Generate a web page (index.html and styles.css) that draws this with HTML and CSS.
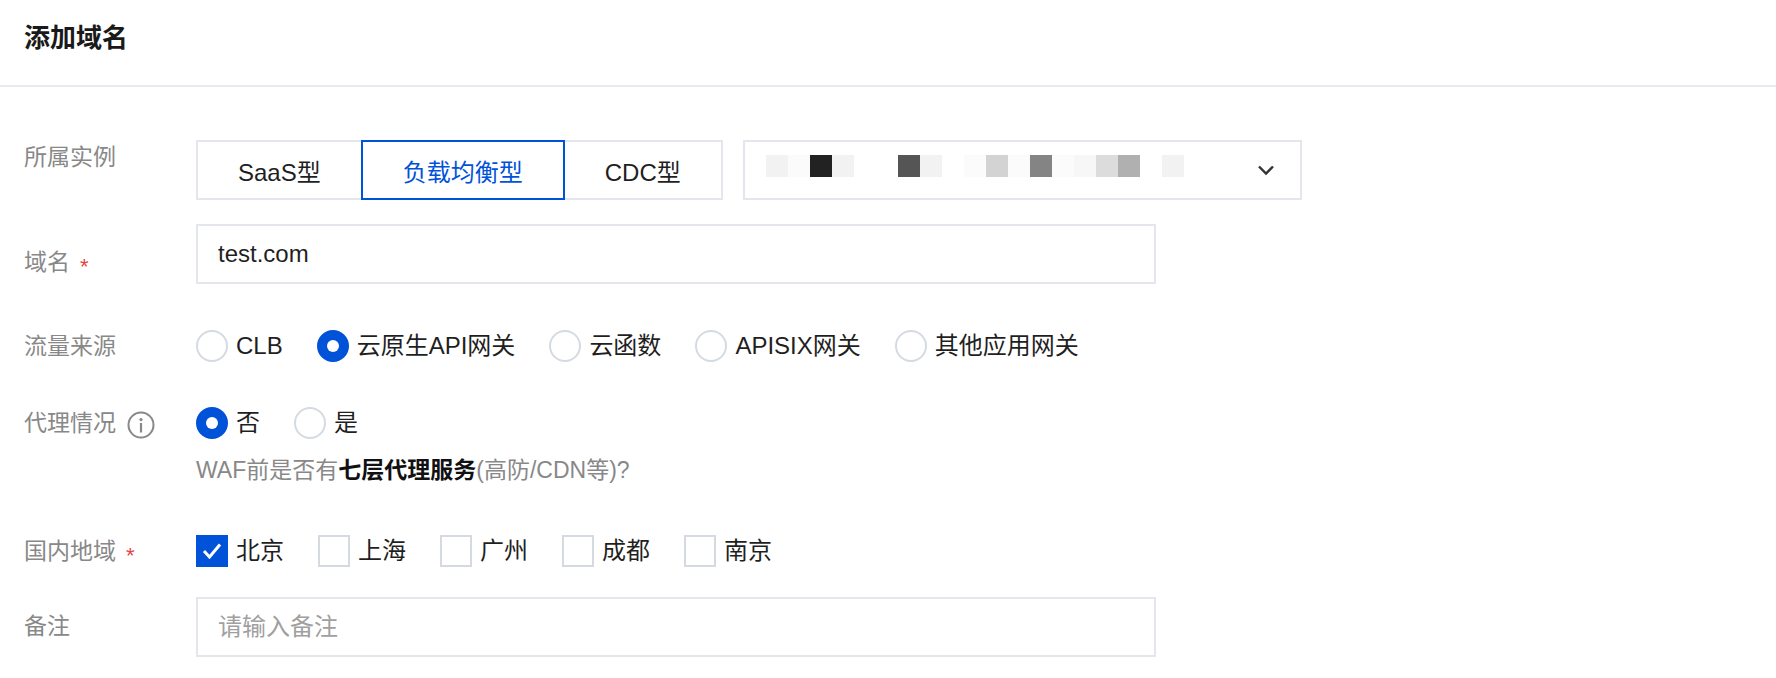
FILE: index.html
```html
<!DOCTYPE html>
<html lang="zh-CN">
<head>
  <meta charset="UTF-8" />
  <meta name="viewport" content="width=device-width, initial-scale=1.0"/>
  <title>添加域名</title>
  <link rel="stylesheet" href="styles.css">
</head>
<body>

  <div class="panel-head">
    <h2 class="panel-title">添加域名</h2>
  </div>

  <form class="form">

    <div class="form-row row-instance">
      <label class="form-label">所属实例</label>
      <div class="form-control">
        <div class="segment">
          <button type="button" class="seg-btn">SaaS型</button>
          <button type="button" class="seg-btn is-active">负载均衡型</button>
          <button type="button" class="seg-btn">CDC型</button>
        </div>
        <div class="select">
          <div class="mosaic">
            <span class="m-a"></span><span class="m-b"></span><span class="m-k"></span><span class="m-a"></span>
            <span></span><span></span><span class="m-d"></span><span class="m-a"></span>
            <span></span><span class="m-b"></span><span class="m-g"></span><span class="m-b"></span>
            <span class="m-e"></span><span class="m-b"></span><span class="m-c"></span><span class="m-h"></span>
            <span class="m-f"></span><span></span><span class="m-a"></span>
          </div>
          <svg class="select-arrow" width="18" height="12" viewBox="0 0 18 12">
            <path d="M2 2.5 L9 9.5 L16 2.5" fill="none" stroke="#333" stroke-width="2.4"/>
          </svg>
        </div>
      </div>
    </div>

    <div class="form-row row-domain">
      <label class="form-label">域名<span class="required">*</span></label>
      <div class="form-control">
        <input class="text-input" type="text" value="test.com">
      </div>
    </div>

    <div class="form-row row-source">
      <label class="form-label">流量来源</label>
      <div class="form-control">
        <span class="radio"><i class="radio-dot"></i>CLB</span>
        <span class="radio is-checked"><i class="radio-dot"></i>云原生API网关</span>
        <span class="radio"><i class="radio-dot"></i>云函数</span>
        <span class="radio"><i class="radio-dot"></i>APISIX网关</span>
        <span class="radio"><i class="radio-dot"></i>其他应用网关</span>
      </div>
    </div>

    <div class="form-row row-proxy">
      <label class="form-label">代理情况
        <svg class="info-icon" width="28" height="28" viewBox="0 0 28 28">
          <circle cx="14" cy="14" r="12.5" fill="none" stroke="#888" stroke-width="2"/>
          <circle cx="14" cy="8.6" r="1.6" fill="#888"/>
          <rect x="12.9" y="12" width="2.2" height="9.5" fill="#888"/>
        </svg>
      </label>
      <div class="form-control stack">
        <div class="radio-group">
          <span class="radio is-checked"><i class="radio-dot"></i>否</span>
          <span class="radio"><i class="radio-dot"></i>是</span>
        </div>
        <p class="help">WAF前是否有<b>七层代理服务</b>(高防/CDN等)?</p>
      </div>
    </div>

    <div class="form-row row-region">
      <label class="form-label">国内地域<span class="required">*</span></label>
      <div class="form-control">
        <span class="checkbox is-checked">
          <i class="check-box">
            <svg width="32" height="32" viewBox="0 0 32 32"><path d="M8 16 L13.5 22 L24 9.5" fill="none" stroke="#fff" stroke-width="3"/></svg>
          </i>北京
        </span>
        <span class="checkbox"><i class="check-box"></i>上海</span>
        <span class="checkbox"><i class="check-box"></i>广州</span>
        <span class="checkbox"><i class="check-box"></i>成都</span>
        <span class="checkbox"><i class="check-box"></i>南京</span>
      </div>
    </div>

    <div class="form-row row-remark">
      <label class="form-label">备注</label>
      <div class="form-control">
        <input class="text-input" type="text" placeholder="请输入备注">
      </div>
    </div>

  </form>

</body>
</html>
```

FILE: styles.css
```css
body { margin: 0; background: #fff; color: #1f1f1f; font-family: "Liberation Sans", "Noto Sans CJK SC", sans-serif; }

.panel-head { height: 87px; box-sizing: border-box; padding: 20px 24px 0; border-bottom: 2px solid #e7eaef; }
.panel-title { margin: 0; font-size: 26px; line-height: 36px; font-weight: bold; color: #1a1a1a; }

.form { padding: 0 24px; }
.form-row { display: flex; align-items: flex-start; }
.form-label { width: 172px; flex: none; display: flex; align-items: center; font-size: 23px; line-height: 34px; color: #888; }
.form-control { display: flex; align-items: center; }
.form-control.stack { flex-direction: column; align-items: flex-start; }

.row-instance { margin-top: 53px; }
.row-domain { margin-top: 24px; }
.row-domain .form-label { padding-top: 21px; }
.row-source { margin-top: 45px; }
.row-proxy { margin-top: 43px; }
.row-region { margin-top: 47px; }
.row-remark { margin-top: 29px; }
.row-remark .form-label { padding-top: 12px; }

.required { margin-left: 10px; margin-top: 10px; font-size: 22px; line-height: 1; color: #e54545; }
.info-icon { margin-left: 11px; margin-top: 3px; }

/* segment */
.segment { display: flex; }
.seg-btn { height: 60px; padding: 0 40px; margin-left: -2px; border: 2px solid #e3e7ed; background: #fff; font-family: inherit; font-size: 24px; color: #1f1f1f; }
.seg-btn:first-child { margin-left: 0; }
.seg-btn.is-active { position: relative; z-index: 1; border-color: #0052d9; color: #0052d9; }

.select { width: 559px; height: 60px; box-sizing: border-box; margin-left: 20px; padding: 0 25px 0 21px; border: 2px solid #e3e7ed; display: flex; align-items: center; justify-content: space-between; }
.mosaic { display: flex; margin-bottom: 8px; }
.mosaic span { width: 22px; height: 22px; }
.m-a { background: #f2f2f2; }
.m-b { background: #fbfbfb; }
.m-c { background: #f7f7f7; }
.m-d { background: #555; }
.m-e { background: #848484; }
.m-f { background: #b0b0b0; }
.m-g { background: #d3d3d3; }
.m-h { background: #dcdcdc; }
.m-k { background: #222; }

/* inputs */
.text-input { width: 960px; height: 60px; box-sizing: border-box; padding: 0 20px; border: 2px solid #e3e7ed; outline: none; font-family: inherit; font-size: 24px; color: #1f1f1f; }
.text-input::placeholder { color: #a0a0a0; }

/* radio */
.radio-group { display: flex; }
.radio { display: flex; align-items: center; margin-right: 34px; font-size: 24px; line-height: 34px; color: #1f1f1f; }
.radio-dot { width: 32px; height: 32px; box-sizing: border-box; margin-right: 8px; border: 2px solid #d5dae2; border-radius: 50%; display: flex; align-items: center; justify-content: center; }
.radio.is-checked .radio-dot { background: #0052d9; border-color: #0052d9; }
.radio.is-checked .radio-dot::after { content: ""; width: 12px; height: 12px; border-radius: 50%; background: #fff; }

.help { margin: 13px 0 0; font-size: 23px; line-height: 34px; color: #888; }
.help b { color: #111; }

/* checkbox */
.checkbox { display: flex; align-items: center; margin-right: 34px; font-size: 24px; line-height: 34px; color: #1f1f1f; }
.check-box { width: 32px; height: 32px; box-sizing: border-box; margin-right: 8px; border: 2px solid #d5dae2; display: flex; }
.checkbox.is-checked .check-box { border: none; background: #0052d9; }
```
